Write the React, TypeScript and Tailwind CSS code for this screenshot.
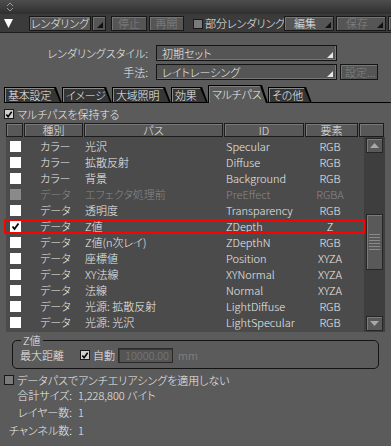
import React from "react";

const F = { fontFamily: '"Noto Sans CJK JP", "Noto Sans", sans-serif' };

const Check = ({ color = "#000" }: { color?: string }) => (
  <svg width="9" height="9" viewBox="0 0 9 9" className="block">
    <polyline points="1.5,4.5 3.5,7 7.5,1.5" fill="none" stroke={color} strokeWidth="1.8" />
  </svg>
);

const Corner = ({ color }: { color: string }) => (
  <svg width="6" height="6" viewBox="0 0 6 6" className="block">
    <polygon points="6,0 6,6 0,6" fill={color} />
  </svg>
);

function Btn({
  w,
  label,
  disabled,
  corner,
}: {
  w: string;
  label?: string;
  disabled?: boolean;
  corner?: boolean;
}) {
  return (
    <div
      className={`${w} h-[15px] shrink-0 flex items-end bg-[#555555] border border-[#181818] shadow-[inset_1px_1px_0_#747474]`}
    >
      <div
        className={`flex-1 h-full flex items-center justify-center whitespace-nowrap text-[11px] leading-none ${
          disabled ? "text-[#858585]" : "text-[#ededed]"
        }`}
      >
        {label}
      </div>
      {corner && (
        <div className="pr-[2px] pb-[2px]">
          <Corner color="#111" />
        </div>
      )}
    </div>
  );
}

function Tab({ w, label, active }: { w: string; label: string; active?: boolean }) {
  const clip = "[clip-path:polygon(0_0,calc(100%-6px)_0,100%_100%,0_100%)]";
  return (
    <div
      className={`${w} ${active ? "h-[18px]" : "h-[16px]"} shrink-0 bg-black ${clip} pt-px pl-px pr-[2px] ${
        active ? "" : "pb-px"
      }`}
    >
      <div
        className={`h-full ${clip} flex items-center pl-[3px] whitespace-nowrap text-[11px] leading-none tracking-[-0.2px] text-[#f0f0f0] ${
          active
            ? "bg-[#5b5b5b] shadow-[inset_1px_1px_0_#7c7c7c]"
            : "bg-[#363636] shadow-[inset_1px_1px_0_#8a8a8a]"
        }`}
      >
        {label}
      </div>
    </div>
  );
}

type Row = {
  kind: string;
  path: string;
  id: string;
  el: string;
  checked?: boolean;
  disabled?: boolean;
  hl?: boolean;
};

const rows: Row[] = [
  { kind: "カラー", path: "光沢", id: "Specular", el: "RGB" },
  { kind: "カラー", path: "拡散反射", id: "Diffuse", el: "RGB" },
  { kind: "カラー", path: "背景", id: "Background", el: "RGB" },
  { kind: "データ", path: "エフェクタ処理前", id: "PreEffect", el: "RGBA", disabled: true },
  { kind: "データ", path: "透明度", id: "Transparency", el: "RGB" },
  { kind: "データ", path: "Z値", id: "ZDepth", el: "Z", checked: true, hl: true },
  { kind: "データ", path: "Z値(n次レイ)", id: "ZDepthN", el: "RGB" },
  { kind: "データ", path: "座標値", id: "Position", el: "XYZA" },
  { kind: "データ", path: "XY法線", id: "XYNormal", el: "XYZA" },
  { kind: "データ", path: "法線", id: "Normal", el: "XYZA" },
  { kind: "データ", path: "光源: 拡散反射", id: "LightDiffuse", el: "RGB" },
  { kind: "データ", path: "光源: 光沢", id: "LightSpecular", el: "RGB" },
];

function HeadCell({ w, label }: { w: string; label?: string }) {
  return (
    <div
      className={`${w} h-full shrink-0 bg-[#585858] border border-[#1c1c1c] shadow-[inset_1px_1px_0_#7a7a7a] flex items-center justify-center text-[11px] leading-none text-[#e6e6e6]`}
    >
      {label}
    </div>
  );
}

function ScrollBtn({ up }: { up?: boolean }) {
  return (
    <div className="w-[17px] h-[15px] bg-[#595959] border border-[#262626] shadow-[inset_1px_1px_0_#7a7a7a] flex items-center justify-center">
      <svg width="9" height="5" viewBox="0 0 9 5" className="block">
        <polygon points={up ? "0,5 9,5 4.5,0" : "0,0 9,0 4.5,5"} fill="#a8a8a8" />
      </svg>
    </div>
  );
}

function OuterCheck({ checked }: { checked?: boolean }) {
  return (
    <div
      className={`w-[10px] h-[10px] shrink-0 border border-[#1a1a1a] flex items-center justify-center ${
        checked ? "bg-[#cfcfcf]" : "bg-[#7a7a7a]"
      }`}
    >
      {checked && <Check />}
    </div>
  );
}

export default function App() {
  return (
    <div
      className="w-[391px] h-[446px] overflow-hidden bg-[#5b5b5b] text-[#ececec] select-none [font-feature-settings:'palt'] font-light"
      style={F}
    >
      {/* title bar */}
      <div className="h-[14px] bg-gradient-to-b from-[#4e4e4e] to-[#2f2f2f] flex items-center pl-[6px]">
        <svg width="8" height="10" viewBox="0 0 8 10" className="block">
          <polyline points="1,4 4,1 7,4" fill="none" stroke="#9a9a9a" strokeWidth="1" />
          <polyline points="1,6 4,9 7,6" fill="none" stroke="#9a9a9a" strokeWidth="1" />
        </svg>
      </div>
      {/* toolbar */}
      <div className="h-[18px] bg-[#3b3b3b] flex items-start pt-[2px] pl-[4px] overflow-hidden">
        <div className="h-[15px] flex items-center">
          <svg width="9" height="9" viewBox="0 0 9 9" className="block">
            <polygon points="0,0 9,0 4.5,9" fill="#ffffff" />
          </svg>
        </div>
        <div className="ml-[16px]">
          <Btn w="w-[62px]" label="レンダリング" />
        </div>
        <div className="ml-[1px]">
          <Btn w="w-[14px]" corner />
        </div>
        <div className="ml-[5px]">
          <Btn w="w-[36px]" label="停止" disabled />
        </div>
        <div className="ml-[2px]">
          <Btn w="w-[35px]" label="再開" disabled />
        </div>
        <div className="ml-[9px] h-[15px] flex items-center">
          <OuterCheck />
        </div>
        <div className="ml-[2px] w-[79px] h-[15px] flex items-center text-[11px] leading-none whitespace-nowrap">
          部分レンダリング
        </div>
        <div>
          <Btn w="w-[50px]" label="編集" corner />
        </div>
        <div className="ml-[2px]">
          <Btn w="w-[50px]" label="保存" disabled corner />
        </div>
        <div className="ml-[2px]">
          <Btn w="w-[30px]" />
        </div>
      </div>

      {/* panel */}
      <div className="border-t border-[#1e1e1e]">
        <div className="pt-[12px]">
          <div className="flex items-center h-[16px]">
            <div className="w-[148px] text-right text-[11px] leading-none whitespace-nowrap">レンダリングスタイル:</div>
            <div className="ml-[8px] w-[181px] h-[16px] bg-[#555555] border border-[#141414] shadow-[inset_-1px_-1px_0_#767676] flex items-center justify-between pl-[5px] pr-[3px]">
              <span className="text-[11px] leading-none">初期セット</span>
              <div className="self-end pb-[2px]">
                <Corner color="#e8e8e8" />
              </div>
            </div>
          </div>
          <div className="flex items-center h-[16px] mt-[3px]">
            <div className="w-[148px] text-right text-[11px] leading-none">手法:</div>
            <div className="ml-[8px] w-[181px] h-[16px] bg-[#555555] border border-[#141414] shadow-[inset_-1px_-1px_0_#767676] flex items-center justify-between pl-[5px] pr-[3px]">
              <span className="text-[11px] leading-none">レイトレーシング</span>
              <div className="self-end pb-[2px]">
                <Corner color="#e8e8e8" />
              </div>
            </div>
            <div className="ml-[3px] w-[38px] h-[16px] bg-[#555555] border border-[#141414] shadow-[inset_1px_1px_0_#767676] flex items-center pl-[4px] whitespace-nowrap text-[11px] leading-none text-[#858585]">
              設定...
            </div>
          </div>
        </div>

        {/* tabs */}
        <div className="mt-[5px] h-[18px] flex items-end pl-[4px]">
          <Tab w="w-[58px]" label="基本設定" />
          <Tab w="w-[50px]" label="イメージ" />
          <Tab w="w-[59px]" label="大域照明" />
          <Tab w="w-[37px]" label="効果" />
          <Tab w="w-[60px]" label="マルチパス" active />
          <Tab w="w-[44px]" label="その他" />
          <div className="flex-1 h-px bg-black" />
        </div>

        {/* keep multipass */}
        <div className="mt-[5px] h-[12px] flex items-center pl-[4px]">
          <OuterCheck checked />
          <span className="ml-[3px] text-[11px] leading-none">マルチパスを保持する</span>
        </div>

        {/* table */}
        <div className="mt-[3px] ml-[6px] w-[379px]">
          <div className="h-[14px] flex gap-px">
            <HeadCell w="w-[17px]" />
            <HeadCell w="w-[59px]" label="種別" />
            <HeadCell w="w-[139px]" label="パス" />
            <HeadCell w="w-[80px]" label="ID" />
            <HeadCell w="w-[53px]" label="要素" />
            <HeadCell w="w-[25px]" />
          </div>
          <div className="h-[195px] flex">
            <div className="w-[358px] bg-[#4b4b4b] pt-px">
              {rows.map((r, i) => (
                <div key={i} className="relative h-[16px] flex items-center text-[11px] leading-none">
                  <div className="w-[34px] pl-[4px]">
                    <div
                      className={`w-[11px] h-[11px] flex items-center justify-center ${
                        r.disabled ? "bg-[#8a8a8a]" : "bg-white"
                      }`}
                    >
                      {r.checked && <Check />}
                    </div>
                  </div>
                  <div className={`w-[45px] whitespace-nowrap ${r.disabled ? "text-[#8a8a8a]" : ""}`}>{r.kind}</div>
                  <div className={`w-[141px] whitespace-nowrap ${r.disabled ? "text-[#8a8a8a]" : ""}`}>{r.path}</div>
                  <div className={`w-[80px] ${r.disabled ? "text-[#8a8a8a]" : ""}`}>{r.id}</div>
                  <div className={`w-[48px] text-center ${r.disabled ? "text-[#8a8a8a]" : ""}`}>{r.el}</div>
                  {r.hl && (
                    <div className="absolute left-[-2px] right-[-1px] top-px bottom-0 border-2 border-[#ff0000]" />
                  )}
                </div>
              ))}
            </div>
            <div className="w-[21px] bg-[#3e3e3e] flex flex-col items-center">
              <div className="mt-px">
                <ScrollBtn up />
              </div>
              <div className="mt-[61px] w-[17px] h-[56px] bg-[#595959] border border-[#262626] shadow-[inset_1px_1px_0_#7a7a7a] flex flex-col items-center justify-center gap-[2px]">
                {[0, 1, 2, 3, 4, 5].map((k) => (
                  <div key={k} className="w-[11px] h-px bg-[#8a8a8a]" />
                ))}
              </div>
              <div className="flex-1" />
              <div className="mb-px">
                <ScrollBtn />
              </div>
            </div>
          </div>
        </div>

        {/* Z group */}
        <fieldset className="mt-px ml-[12px] w-[367px] border border-[#141414] rounded-[5px] px-[7px] pb-[5px]">
          <legend className="ml-[1px] px-[2px] text-[11px] leading-[14px]">Z値</legend>
          <div className="h-[16px] flex items-center text-[11px] leading-none">
            <span>最大距離</span>
            <div className="ml-[16px] w-[10px] h-[10px] bg-[#cfcfcf] border border-[#1a1a1a] flex items-center justify-center">
              <Check />
            </div>
            <span className="ml-[3px]">自動</span>
            <div className="ml-[3px] w-[55px] h-[15px] bg-[#555555] border border-[#2a2a2a] shadow-[inset_1px_1px_0_#3a3a3a] flex items-center justify-end pr-[3px] text-[#7c7c7c]">
              10000.00
            </div>
            <span className="ml-[5px] text-[#8a8a8a]">mm</span>
          </div>
        </fieldset>

        <div className="mt-[5px] h-[12px] flex items-center pl-[4px]">
          <OuterCheck />
          <span className="ml-[3px] text-[11px] leading-none whitespace-nowrap">データパスでアンチエリアシングを適用しない</span>
        </div>

        <div className="mt-[1px] h-[17px] flex items-center text-[11px] leading-none">
          <div className="w-[72px] text-right whitespace-nowrap">合計サイズ:</div>
          <div className="ml-[6px] whitespace-nowrap">1,228,800 バイト</div>
        </div>
        <div className="h-[17px] flex items-center text-[11px] leading-none">
          <div className="w-[72px] text-right whitespace-nowrap">レイヤー数:</div>
          <div className="ml-[6px]">1</div>
        </div>
        <div className="mt-[1px] h-[17px] flex items-center text-[11px] leading-none">
          <div className="w-[72px] text-right whitespace-nowrap">チャンネル数:</div>
          <div className="ml-[6px]">1</div>
        </div>
      </div>
    </div>
  );
}
